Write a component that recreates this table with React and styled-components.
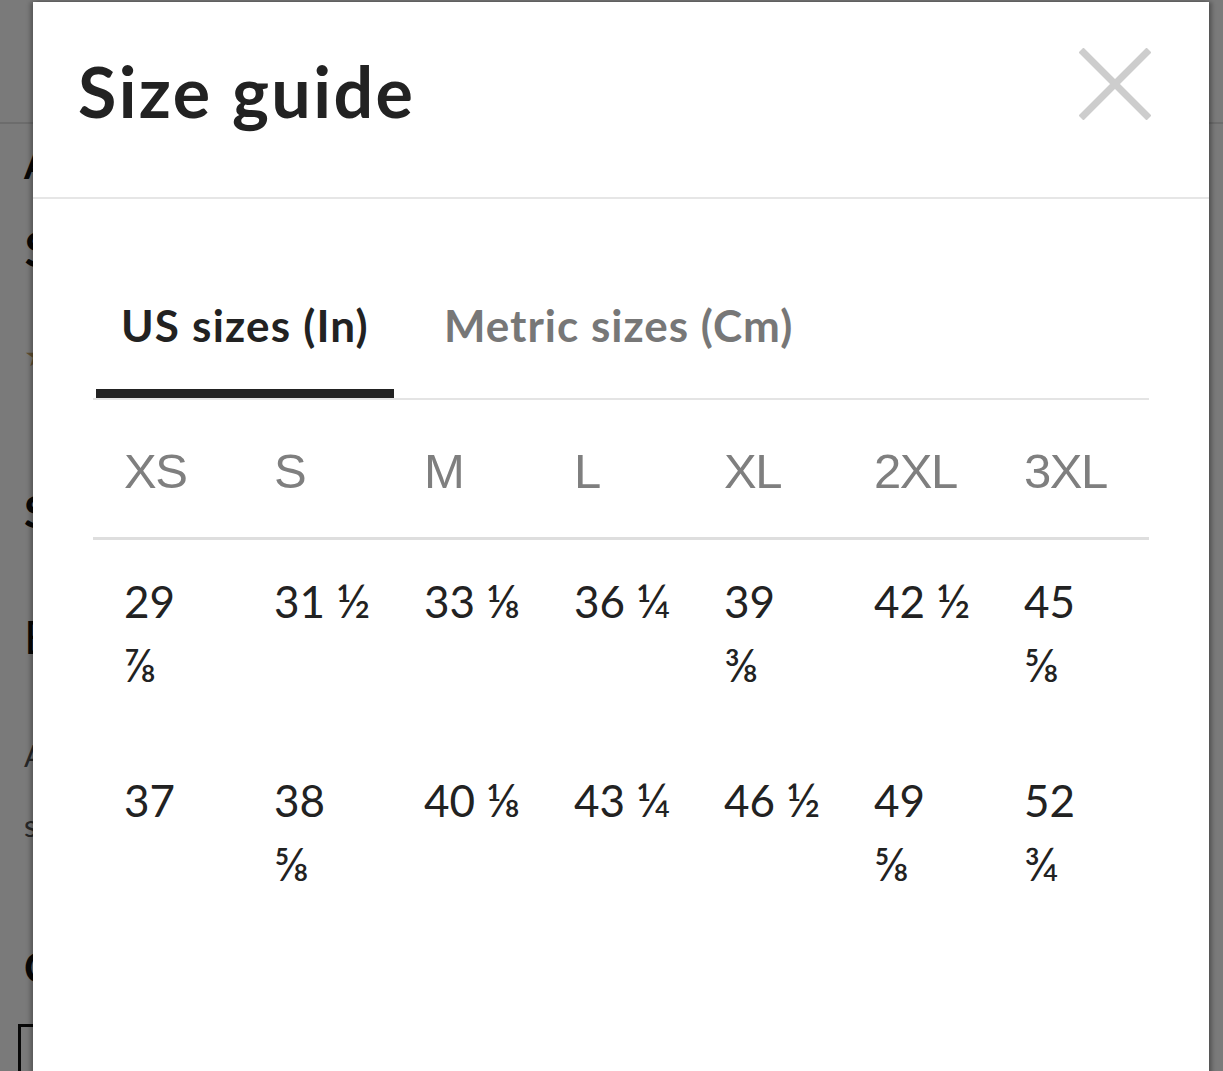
import React from "react";
import styled, { createGlobalStyle } from "styled-components";

const GlobalStyle = createGlobalStyle`
  html, body {
    margin: 0;
    padding: 0;
    background: #fff;
    overflow: hidden;
  }
  body {
    font-family: Lato, "Noto Sans", "DejaVu Sans", sans-serif;
    color: #222;
  }
`;

const sizes = ["XS", "S", "M", "L", "XL", "2XL", "3XL"];

// [whole, fraction, fraction drops to next line]
const rows = [
  [["29", "⅞", true], ["31", "½"], ["33", "⅛"], ["36", "¼"], ["39", "⅜", true], ["42", "½"], ["45", "⅝", true]],
  [["37"], ["38", "⅝", true], ["40", "⅛"], ["43", "¼"], ["46", "½"], ["49", "⅝", true], ["52", "¾", true]],
];

const Page = styled.div`
  position: relative;
  width: 1223px;
  height: 1071px;
  overflow: hidden;
`;

const PageHeader = styled.div`
  height: 122px;
  border-bottom: 2px solid #e2e2e2;
`;

const PageBody = styled.div`
  display: flex;
  flex-direction: column;
  align-items: flex-start;
  padding-left: 24px;
  line-height: 1;
`;

const ProductTitle = styled.div`
  margin-top: ${(p) => p.$top}px;
  font-size: ${(p) => p.$size}px;
  font-weight: ${(p) => (p.$bold ? 700 : 400)};
  color: ${(p) => p.$color || "#111"};
  white-space: nowrap;
`;

const Stars = styled.div`
  margin-top: 66px;
  font-size: 30px;
  color: #c9a56c;
  letter-spacing: 2px;
`;

const OutlineButton = styled.div`
  margin-top: 36px;
  margin-left: -6px;
  border: 3px solid #111;
  border-bottom: 0;
  padding: 14px 12px 0;
  font-size: 32px;
  font-weight: 700;
  width: 300px;
  height: 40px;
`;

const Overlay = styled.div`
  position: absolute;
  inset: 0;
  background: rgba(0, 0, 0, 0.52);
`;

const Modal = styled.div`
  position: absolute;
  top: 2px;
  left: 33px;
  width: 1176px;
  bottom: -40px;
  background: #fff;
  box-shadow: -3px 0 4px rgba(0, 0, 0, 0.25), 3px 0 4px rgba(0, 0, 0, 0.3);
`;

const ModalHeader = styled.div`
  display: flex;
  justify-content: space-between;
  align-items: flex-start;
  height: 197px;
  box-sizing: border-box;
  padding: 46px 58px 0 45px;
  border-bottom: 2px solid #e6e6e6;
`;

const Title = styled.h2`
  margin: 8px 0 0;
  font-size: 70px;
  line-height: 1;
  font-weight: 700;
  color: #222;
  letter-spacing: 2.4px;
`;

const CloseButton = styled.button`
  border: 0;
  padding: 0;
  background: none;
  width: 72px;
  height: 72px;
  cursor: pointer;
  svg {
    display: block;
  }
`;

const ModalBody = styled.div`
  padding: 100px 60px 0;
`;

const TabList = styled.div`
  display: flex;
  gap: 25px;
  padding-left: 3px;
  border-bottom: 2px solid #e4e4e4;
`;

const Tab = styled.div`
  padding: 0 25px 37px;
  border-bottom: 9px solid ${(p) => (p.$active ? "#222" : "transparent")};
  font-size: 44px;
  line-height: 53px;
  font-weight: 700;
  letter-spacing: ${(p) => (p.$active ? 1.2 : 1)}px;
  color: ${(p) => (p.$active ? "#222" : "#777")};
  white-space: nowrap;
`;

const Grid = styled.div`
  display: grid;
  grid-template-columns: repeat(7, 150px);
  border-bottom: ${(p) => (p.$head ? "3px solid #dedede" : "0")};
`;

const HeadCell = styled.div`
  padding: 46px 0 41px 31px;
  font-family: "Liberation Sans", Arial, sans-serif;
  font-size: 49px;
  line-height: 50px;
  color: #7f7f7f;
  letter-spacing: -1.5px;
`;

const Cell = styled.div`
  padding: 30px 0 43px 31px;
  font-size: 44px;
  line-height: 63px;
  color: #222;
`;

const Frac = styled.span`
  display: ${(p) => (p.$block ? "block" : "inline")};
  font-size: 47px;
  line-height: ${(p) => (p.$block ? "63px" : "1")};
`;

const CloseIcon = () => (
  <svg width="72" height="72" viewBox="0 0 72 72">
    <path d="M2 2 L70 70 M70 2 L2 70" stroke="#cdcdcd" strokeWidth="7" />
  </svg>
);

export default function App() {
  return (
    <>
      <GlobalStyle />
      <Page>
        <PageHeader />
        <PageBody>
          <ProductTitle $top={21} $size={38} $bold>
            Ash
          </ProductTitle>
          <ProductTitle $top={42} $size={48} $bold>
            $24
          </ProductTitle>
          <Stars>★</Stars>
          <ProductTitle $top={120} $size={44} $bold>
            Sz
          </ProductTitle>
          <ProductTitle $top={81} $size={46}>
            B
          </ProductTitle>
          <ProductTitle $top={80} $size={30} $color="#555">
            All
          </ProductTitle>
          <ProductTitle $top={40} $size={30} $color="#555">
            se
          </ProductTitle>
          <ProductTitle $top={106} $size={42} $bold>
            Co
          </ProductTitle>
          <OutlineButton>c</OutlineButton>
        </PageBody>
        <Overlay />
        <Modal>
          <ModalHeader>
            <Title>Size guide</Title>
            <CloseButton aria-label="Close">
              <CloseIcon />
            </CloseButton>
          </ModalHeader>
          <ModalBody>
            <TabList>
              <Tab $active>US sizes (In)</Tab>
              <Tab>Metric sizes (Cm)</Tab>
            </TabList>
            <Grid $head>
              {sizes.map((s) => (
                <HeadCell key={s}>{s}</HeadCell>
              ))}
            </Grid>
            {rows.map((row, i) => (
              <Grid key={i}>
                {row.map(([whole, frac, drop], j) => (
                  <Cell key={j}>
                    {whole}
                    {frac && !drop && " "}
                    {frac && <Frac $block={drop}>{frac}</Frac>}
                  </Cell>
                ))}
              </Grid>
            ))}
          </ModalBody>
        </Modal>
      </Page>
    </>
  );
}
